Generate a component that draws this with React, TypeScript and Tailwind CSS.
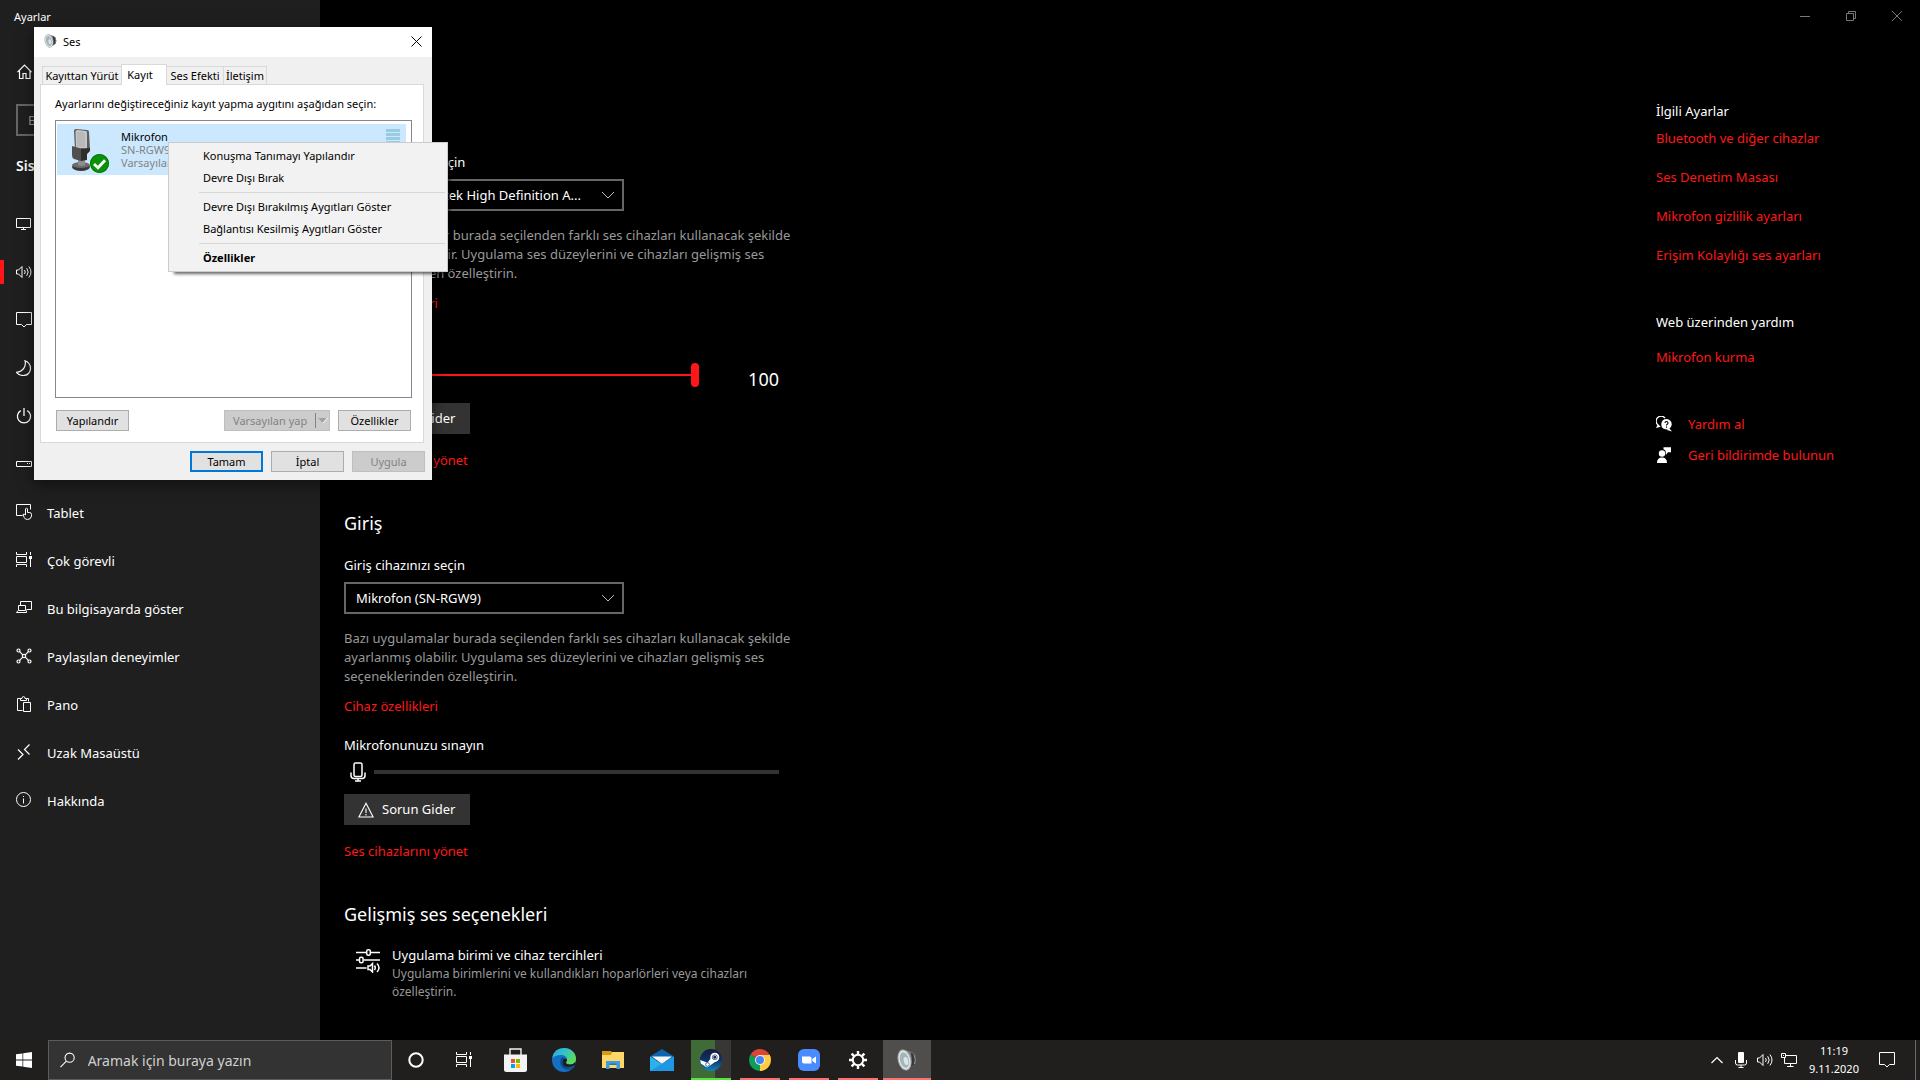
import React, { useState } from 'react';
import clsx from 'clsx';

type IconProps = { className?: string };

const line = {
  fill: 'none',
  stroke: 'currentColor',
  strokeWidth: 1,
} as const;

/* ---------- sidebar icons ---------- */

const HomeIcon = () => (
  <svg className="size-4" viewBox="0 0 16 16" {...line} strokeWidth={1.2}>
    <path d="M1.500 8.200 8.500 1.200l7 7M3.500 6.500v8h3.500v-5h3v5h4v-8" />
  </svg>
);

const DisplayIcon = () => (
  <svg className="size-4" viewBox="0 0 16 16" {...line}>
    <path d="M.5 2.500h14v9H.5zM7.500 11.500v2M5 13.500h5" />
  </svg>
);

const SpeakerIcon = ({ className = 'size-4' }: IconProps) => (
  <svg className={className} viewBox="0 0 16 16" {...line}>
    <path d="M.5 6v4h2l3.500 3.500v-11L2.500 6zM8.500 6q1.500 2 0 4M10.700 4.200q3 3.800 0 7.600M12.900 2.500q4.200 5.500 0 11" />
  </svg>
);

const NotifyIcon = ({ className = 'size-4' }: IconProps) => (
  <svg className={className} viewBox="0 0 16 16" {...line}>
    <path d="M.5.500h15v12h-5L8 15l-2.500-2.500h-5z" />
  </svg>
);

const MoonIcon = () => (
  <svg className="size-4" viewBox="0 0 16 16" {...line} strokeWidth={1.2}>
    <path d="M9 .7c1.400 5-1.500 11-8.500 11.600C2.500 15 5 15.500 7.500 15.500c4 0 7-3 7-7 0-3.800-2-6.500-5.500-7.800z" />
  </svg>
);

const PowerIcon = () => (
  <svg className="size-4" viewBox="0 0 16 16" {...line} strokeWidth={1.3}>
    <path d="M8 0v8M4.700 2.600a6.600 6.600 0 1 0 6.600 0" />
  </svg>
);

const StorageIcon = () => (
  <svg className="size-4" viewBox="0 0 16 16" {...line}>
    <path d="M.5 5.500h15v5H.5zM11 7.500h1M13 7.500h1" />
  </svg>
);

const TabletIcon = () => (
  <svg className="size-4" viewBox="0 0 16 16" {...line}>
    <path d="M6.500 11.500h-6v-11h14v5M9.500 11V4.800q1-1 2 0V8.500h2q2 0 2 2v1.500q-.5 3.500-4 3.500-2.500 0-3.300-2L7 10.500q1-1 2.500.5" />
  </svg>
);

const TaskViewIcon = ({ className = 'size-4' }: IconProps) => (
  <svg className={className} viewBox="0 0 16 16" {...line}>
    <path d="M.5 0v2.500h10V0M.5 15v-2.500h10V15M.5 4.500h10v6H.5zM14.500 0v3M14.500 7v8" />
    <path d="M13 4h3v3h-3z" fill="currentColor" stroke="none" />
  </svg>
);

const ProjectIcon = () => (
  <svg className="size-4" viewBox="0 0 16 16" {...line}>
    <path d="M4.500 5.500v-4h11v8h-5M2.500 5.500h7v5h-7zM2 10.500l-1.500 2h10v-2" />
  </svg>
);

const SharedIcon = () => (
  <svg className="size-4" viewBox="0 0 16 16" {...line} strokeWidth={1.2}>
    <circle cx="2.500" cy="2.500" r="1.500" />
    <circle cx="13.500" cy="2.500" r="1.500" />
    <circle cx="2.500" cy="13.500" r="1.500" />
    <circle cx="13.500" cy="13.500" r="1.500" />
    <circle cx="8" cy="8" r="1.700" />
    <path d="M3.600 3.600 6.800 6.800M12.400 3.600 9.200 6.800M3.600 12.400l3.200-3.200M12.400 12.400 9.200 9.200" />
  </svg>
);

const ClipboardIcon = () => (
  <svg className="size-4" viewBox="0 0 16 16" {...line}>
    <path d="M6.500 14.500h-5v-12h3M10.500 2.500h2v3M4.500 4.500v-2h1.500q0-2 1.500-2t1.500 2h1.500v2zM7.500 6.500h7v9h-7z" />
  </svg>
);

const RemoteIcon = () => (
  <svg className="size-4" viewBox="0 0 16 16" {...line} strokeWidth={1.2}>
    <path d="M2 5.500 7 10.500 2 15.500M13.500.500 8.500 5.500l5 5" />
  </svg>
);

const InfoIcon = () => (
  <svg className="size-4" viewBox="0 0 16 16" {...line}>
    <circle cx="7.500" cy="7.500" r="7" />
    <path d="M7.500 6.500v5M7.500 4v1" />
  </svg>
);

/* ---------- content icons ---------- */

const ChevronDown = ({ className }: IconProps) => (
  <svg className={className} width="14" height="8" viewBox="0 0 14 8" {...line}>
    <path d="M1 1l6 6 6-6" />
  </svg>
);

const WarningIcon = () => (
  <svg className="size-4" viewBox="0 0 16 16" {...line} strokeWidth={1.1}>
    <path d="M8 1.200.9 15h14.200zM8 6.500v4.500M8 12v1.500" />
  </svg>
);

const MicIcon = () => (
  <svg width="16" height="20" viewBox="0 0 16 20" {...line} strokeWidth={1.5}>
    <rect x="4" y="1" width="8" height="13.500" rx="1.500" />
    <path d="M1 10.500v3q0 3 3 3h8q3 0 3-3v-3M8 16.500V19M5 19h6" />
  </svg>
);

const MixerIcon = () => (
  <svg className="size-6" viewBox="0 0 24 24" {...line} strokeWidth={1.5}>
    <path d="M0 3.500h10M15 3.500h9M0 11h3M8 11h16M0 19h10.500" />
    <rect x="10.700" y=".8" width="3.600" height="5.400" rx="1.500" />
    <rect x="3.500" y="8.300" width="3.600" height="5.400" rx="1.500" />
    <path d="M12 17v3.500h2l2.500 2.500v-8.500L14 17zM18.500 16.500q1.500 2.200 0 4.500M21 14.500q4 4.200 0 8.500" />
  </svg>
);

const HelpIcon = () => (
  <svg className="size-4" viewBox="0 0 16 16">
    <path d="M3.200 9.800A5 5 0 1 1 9 2" fill="none" stroke="currentColor" strokeWidth="1.300" />
    <path d="M0 12l1.800-3.500 3 2.300z" fill="currentColor" />
    <path d="M10.500 3a5.200 5.200 0 1 1-1 10.300A5.200 5.200 0 0 1 10.500 3zM13 12l3 3.600-5-1.600z" fill="currentColor" />
    <path d="M9 7q0-1.500 1.500-1.500T12 7q0 .8-.8 1.300-.7.500-.7 1.200M10.500 10.500v1.200" fill="none" stroke="#000" strokeWidth="1.100" />
  </svg>
);

const FeedbackIcon = () => (
  <svg className="size-4" viewBox="0 0 16 16" fill="currentColor">
    <circle cx="6" cy="6.500" r="3.200" />
    <path d="M1 16q0-5.500 5-5.500t5 5.500zM7.500.3H15v5h-3L9.800 8V5.200q0-2.500-2.300-3z" />
  </svg>
);

/* ---------- dialog drawings ---------- */

const LoudspeakerIcon = ({ className }: IconProps) => (
  <svg className={className} viewBox="0 0 20 22">
    <path d="M6 .5 15 3l3 3q2 5 0 9l-4 3-6 3z" fill="#7c8082" />
    <path d="M13.500 3 18 6q2 5 0 9l-5 3.500q3-8 .5-15.500z" fill="#35383a" />
    <path d="M17 5.500q2.500 5 .5 9.500" fill="none" stroke="#9da1a3" />
    <ellipse cx="7.500" cy="11" rx="6.200" ry="10.200" transform="rotate(-14 7.500 11)" fill="#e4e8ea" stroke="#a4a9ab" />
    <ellipse cx="7.500" cy="11" rx="4.500" ry="8" transform="rotate(-14 7.500 11)" fill="#a3b4bb" />
    <ellipse cx="9" cy="12" rx="2.200" ry="4" transform="rotate(-14 9 12)" fill="#dbe5e9" />
  </svg>
);

const MicrophoneDevice = () => (
  <svg width="40" height="46" viewBox="0 0 40 46">
    <ellipse cx="10" cy="39" rx="9" ry="4" fill="#3a3a3a" />
    <ellipse cx="10" cy="37" rx="9" ry="3" fill="#6c6c6c" />
    <path d="M7 30h7v7q-3 2-7 0z" fill="#8d8d8d" />
    <path d="M3 3q0-2 2-2l11 1q2 0 2 2l1 17-15 1z" fill="#5e5e5e" />
    <path d="M4.500 4q0-2 2-2l8.500 1q1 0 1 2v16L5 20z" fill="#c6c6c6" />
    <path d="M7 4v15M9 4v15M11 4v15M13 5v14" stroke="#a2a2a2" strokeWidth=".7" />
    <path d="M1 18l9 2.500V33L3 31q-2-1-2-4z" fill="#505050" />
    <path d="M10 20.500 19 20v3l-3 3v6l-6 1z" fill="#2e2e2e" />
    <circle cx="28.500" cy="35.500" r="9.500" fill="#0a930a" />
    <circle cx="28.500" cy="35.500" r="9" fill="none" stroke="#076b07" strokeWidth=".8" />
    <path d="M23 36l4 3.700 7-7.500" fill="none" stroke="#fff" strokeWidth="2.800" />
  </svg>
);

/* ---------- taskbar logos ---------- */

const WindowsLogo = () => (
  <svg className="size-4" viewBox="0 0 16 16" fill="#fff">
    <path d="M0 2.300 6.500 1.400v6.200H0zM7.200 1.300 16 0v7.600H7.200zM0 8.400h6.500v6.200L0 13.700zM7.200 8.400H16V16l-8.800-1.300z" />
  </svg>
);

const StoreLogo = () => (
  <svg className="size-6" viewBox="0 0 24 24">
    <path d="M7 7V1h11v6" fill="none" stroke="#f2f2f2" strokeWidth="1.400" />
    <path d="M1 6.500h23v15q0 2.500-2.500 2.500h-18Q1 24 1 21.500z" fill="#f3f3f3" />
    <path d="M8 11h4v4H8z" fill="#f25022" />
    <path d="M13 11h4v4h-4z" fill="#7fba00" />
    <path d="M8 16h4v4H8z" fill="#00a4ef" />
    <path d="M13 16h4v4h-4z" fill="#ffb900" />
  </svg>
);

const EdgeLogo = () => (
  <svg className="size-6" viewBox="0 0 24 24">
    <defs>
      <linearGradient id="edgeTop" x1="0" y1="0" x2="1" y2=".6">
        <stop offset="0" stopColor="#2aa7e0" />
        <stop offset=".5" stopColor="#35c1c9" />
        <stop offset="1" stopColor="#5fdc55" />
      </linearGradient>
    </defs>
    <circle cx="12" cy="12" r="12" fill="#1470c4" />
    <path d="M.3 10Q2 0 12 0c7 0 12 5 12 10.500 0 4-3 6-6 6-2.500 0-4-1-4-2 0-.8 1-1 1-3C15 9 13 7.500 10 7 6 6.500 2 8 .3 10z" fill="url(#edgeTop)" />
    <path d="M9.800 9.500C7.500 12 7.500 17 11 20c3 2.500 8 2 11-.5q.5-.5 0-1c-5 2.200-11 .5-11.500-4-.2-2 .5-3.500 1.500-4.200-.5-1-1.500-1.200-2.200-.8z" fill="#0c4a94" />
    <path d="M11 11.500q-2 6.500 4 7.500 4 .5 7.500-1.500l1-1.500-.2-2q-2 2.500-5.300 2.500c-2.500 0-4-1-4-2 0-.8 1-1 1-3-1-1.500-3.500-1.500-4 0z" fill="#201f1e" />
  </svg>
);

const FolderLogo = () => (
  <svg className="size-6" viewBox="0 0 24 24">
    <path d="M1 3h9l1.500 2H22v5H1z" fill="#d99a16" />
    <path d="M11 4h12v16H1V7h9z" fill="#ffd667" />
    <path d="M5 13h14v8h-3.500v-4h-7v4H5z" fill="#3d9be2" />
    <path d="M8.500 15.500h7V17h-7z" fill="#1c77c2" />
  </svg>
);

const MailLogo = () => (
  <svg className="size-6" viewBox="0 0 24 24">
    <path d="M0 8.500 12 1l12 7.500V12H0z" fill="#0f64b0" />
    <path d="M2 8.500h20L12 16z" fill="#f6f6f6" />
    <path d="M0 8.500 12 16l12-7.500V23H0z" fill="#2bb2ee" />
    <path d="M0 23 24 8.500V23z" fill="#1c98e4" />
  </svg>
);

const SteamLogo = () => (
  <svg className="size-[22px]" viewBox="0 0 22 22">
    <defs>
      <linearGradient id="steamBg" x1="0" y1="0" x2="0" y2="1">
        <stop offset="0" stopColor="#15193f" />
        <stop offset=".5" stopColor="#0d3266" />
        <stop offset="1" stopColor="#1383bd" />
      </linearGradient>
    </defs>
    <circle cx="11" cy="11" r="11" fill="url(#steamBg)" />
    <path d="M.2 11 7.500 13.700l4-5.500 6 3-7.500 5.300q-1.500 2.500-4 1.500L.8 14.500z" fill="#fff" />
    <circle cx="14.800" cy="8.200" r="3.600" fill="#15305f" stroke="#fff" strokeWidth="1.800" />
    <circle cx="14.800" cy="8.200" r="1.900" fill="none" stroke="#fff" strokeWidth=".7" />
    <circle cx="7.500" cy="15.500" r="1.900" fill="#fff" stroke="#15507f" strokeWidth=".8" />
  </svg>
);

const ChromeLogo = () => (
  <svg className="size-[22px]" viewBox="0 0 22 22">
    <path d="M11 11 1.500 5.500A11 11 0 0 1 20.500 5.500z" fill="#db4437" />
    <path d="M11 11 20.500 5.500A11 11 0 0 1 11 22z" fill="#ffcd40" />
    <path d="M11 11v11A11 11 0 0 1 1.500 5.500z" fill="#0f9d58" />
    <path d="M11 6h9.800q2.200 6-2 11-3 4.500-7.800 5l4.500-8z" fill="#ffcd40" />
    <circle cx="11" cy="11" r="5" fill="#f1f1f1" />
    <circle cx="11" cy="11" r="4" fill="#4285f4" />
  </svg>
);

const ZoomLogo = () => (
  <svg className="size-[22px]" viewBox="0 0 22 22">
    <rect width="22" height="22" rx="6" fill="#4a8cff" />
    <path d="M4 7.500h7.500q2 0 2 2v5H6q-2 0-2-2zM14.300 10 18 7.500v7l-3.700-2.500z" fill="#fff" />
  </svg>
);

const GearLogo = () => (
  <svg className="size-[18px]" viewBox="0 0 18 18" fill="none" stroke="#fff">
    <circle cx="9" cy="9" r="5.200" strokeWidth="2" />
    <path d="M9 0v3.500M9 14.500V18M0 9h3.500M14.500 9H18M2.600 2.600l2.500 2.500M12.900 12.900l2.500 2.500M15.400 2.600l-2.500 2.500M5.100 12.900l-2.500 2.500" strokeWidth="2.400" />
  </svg>
);

/* ---------- data ---------- */

const navItems = [
  { label: 'Ekran', icon: <DisplayIcon /> },
  { label: 'Ses', icon: <SpeakerIcon />, active: true },
  { label: 'Bildirimler ve eylemler', icon: <NotifyIcon /> },
  { label: 'Odaklanma yardımı', icon: <MoonIcon /> },
  { label: 'Güç ve uyku', icon: <PowerIcon /> },
  { label: 'Depolama', icon: <StorageIcon /> },
  { label: 'Tablet', icon: <TabletIcon /> },
  { label: 'Çok görevli', icon: <TaskViewIcon /> },
  { label: 'Bu bilgisayarda göster', icon: <ProjectIcon /> },
  { label: 'Paylaşılan deneyimler', icon: <SharedIcon /> },
  { label: 'Pano', icon: <ClipboardIcon /> },
  { label: 'Uzak Masaüstü', icon: <RemoteIcon /> },
  { label: 'Hakkında', icon: <InfoIcon /> },
];

const relatedLinks = [
  'Bluetooth ve diğer cihazlar',
  'Ses Denetim Masası',
  'Mikrofon gizlilik ayarları',
  'Erişim Kolaylığı ses ayarları',
];

const apps = [
  { name: 'Microsoft Store', logo: <StoreLogo />, state: 'pinned' },
  { name: 'Microsoft Edge', logo: <EdgeLogo />, state: 'pinned' },
  { name: 'Dosya Gezgini', logo: <FolderLogo />, state: 'pinned' },
  { name: 'Posta', logo: <MailLogo />, state: 'pinned' },
  { name: 'Steam', logo: <SteamLogo />, state: 'progress' },
  { name: 'Google Chrome', logo: <ChromeLogo />, state: 'running' },
  { name: 'Zoom', logo: <ZoomLogo />, state: 'running' },
  { name: 'Ayarlar', logo: <GearLogo />, state: 'running' },
  { name: 'Ses', logo: <LoudspeakerIcon className="h-[22px] w-5" />, state: 'active' },
];

/* ---------- settings window ---------- */

const Sidebar = () => (
  <aside className="flex w-80 shrink-0 flex-col bg-[#1f1f1f]">
    <div className="flex h-8 items-center pt-0.5 pl-3.5 text-[11px]">Ayarlar</div>
    <a href="#home" className="mt-4 flex h-12 items-center gap-4 pl-4">
      <HomeIcon />
      Giriş
    </a>
    <input
      type="search"
      aria-label="Ayar bulun"
      placeholder="Bir ayar bulun"
      className="mx-4 mt-2 h-8 border-2 border-[#666] bg-transparent px-2.5 placeholder:text-[#999]"
    />
    <h2 className="mt-5 pl-4 text-sm leading-5 font-semibold">Sistem</h2>
    <nav className="mt-6">
      {navItems.map((item) => (
        <a key={item.label} href="#" className="relative flex h-12 items-center gap-[15px] pl-4">
          {item.active && <span className="absolute left-0 h-6 w-1 bg-[#ff1717]" />}
          {item.icon}
          <span className="pt-[3px]">{item.label}</span>
        </a>
      ))}
    </nav>
  </aside>
);

const RedLink = ({ children, className }: { children: React.ReactNode; className?: string }) => (
  <a href="#" className={clsx('leading-5 text-[#ff1717]', className)}>
    {children}
  </a>
);

const DeviceSelect = ({ id, label, value }: { id: string; label: string; value: string }) => (
  <div className="mt-[18px] flex flex-col">
    <label htmlFor={id} className="leading-5">
      {label}
    </label>
    <div className="relative mt-[7px] w-[280px]">
      <select
        id={id}
        className="h-8 w-full appearance-none border-2 border-[#666] bg-black pt-px pr-8 pl-2.5 text-white"
      >
        <option>{value}</option>
      </select>
      <ChevronDown className="pointer-events-none absolute top-3 right-[9px] text-[#bbb]" />
    </div>
    <p className="mt-[15px] leading-[19px] text-[#999]">
      Bazı uygulamalar burada seçilenden farklı ses cihazları kullanacak şekilde ayarlanmış
      olabilir. Uygulama ses düzeylerini ve cihazları gelişmiş ses seçeneklerinden özelleştirin.
    </p>
    <RedLink className="mt-2.5 self-start">Cihaz özellikleri</RedLink>
  </div>
);

const TroubleshootButton = () => (
  <button className="mt-1.5 flex h-[31px] w-[126px] items-center gap-2 self-start bg-[#333] pl-3.5">
    <WarningIcon />
    Sorun Gider
  </button>
);

const SettingsContent = () => {
  const [volume, setVolume] = useState(100);

  return (
    <div className="box-content flex w-[460px] flex-col pl-6">
      <h1 className="mt-3 text-3xl">Ses</h1>

      <section className="mt-[26px] flex flex-col">
        <h2 className="text-lg leading-7">Çıkış</h2>
        <DeviceSelect
          id="output"
          label="Çıkış cihazınızı seçin"
          value="Hoparlör (Realtek High Definition A..."
        />
        <label htmlFor="volume" className="mt-[19px] leading-5">
          Ses düzeyi
        </label>
        <div className="mt-px flex h-11 items-center pl-3">
          <SpeakerIcon />
          <input
            id="volume"
            type="range"
            value={volume}
            onChange={(e) => setVolume(Number(e.target.value))}
            className="ml-4 h-6 w-[311px] appearance-none bg-transparent [&::-webkit-slider-runnable-track]:h-0.5 [&::-webkit-slider-runnable-track]:bg-[#ff1717] [&::-webkit-slider-thumb]:-mt-[11px] [&::-webkit-slider-thumb]:h-6 [&::-webkit-slider-thumb]:w-2 [&::-webkit-slider-thumb]:appearance-none [&::-webkit-slider-thumb]:rounded-full [&::-webkit-slider-thumb]:bg-[#ff1717]"
          />
          <output htmlFor="volume" className="w-20 pt-2 text-right text-lg">
            {volume}
          </output>
        </div>
        <TroubleshootButton />
        <RedLink className="mt-4 self-start">Ses cihazlarını yönet</RedLink>
      </section>

      <section className="mt-[39px] flex flex-col">
        <h2 className="text-lg leading-7">Giriş</h2>
        <DeviceSelect id="input" label="Giriş cihazınızı seçin" value="Mikrofon (SN-RGW9)" />
        <div className="mt-[19px] leading-5">Mikrofonunuzu sınayın</div>
        <div className="mt-px flex h-8 items-center pl-1.5">
          <MicIcon />
          <div
            role="meter"
            aria-label="Mikrofonunuzu sınayın"
            aria-valuenow={0}
            className="ml-2 h-1 w-[405px] bg-[#333]"
          />
        </div>
        <TroubleshootButton />
        <RedLink className="mt-4 self-start">Ses cihazlarını yönet</RedLink>
      </section>

      <section className="mt-[39px]">
        <h2 className="text-lg leading-7">Gelişmiş ses seçenekleri</h2>
        <a href="#" className="mt-[18px] flex gap-3 pl-3">
          <span className="mt-[3px]">
            <MixerIcon />
          </span>
          <span>
            <span className="block leading-[19px]">Uygulama birimi ve cihaz tercihleri</span>
            <span className="block text-xs leading-[18px] text-[#999]">
              Uygulama birimlerini ve kullandıkları hoparlörleri veya cihazları özelleştirin.
            </span>
          </span>
        </a>
      </section>
    </div>
  );
};

const RelatedColumn = () => (
  <aside className="w-[264px] shrink-0 pt-[69px]">
    <h3 className="leading-5">İlgili Ayarlar</h3>
    <ul className="mt-[7px] flex flex-col gap-[19px]">
      {relatedLinks.map((text) => (
        <li key={text} className="h-5">
          <RedLink>{text}</RedLink>
        </li>
      ))}
    </ul>
    <h3 className="mt-[47px] leading-5">Web üzerinden yardım</h3>
    <div className="mt-[15px] h-5">
      <RedLink>Mikrofon kurma</RedLink>
    </div>
    <div className="mt-[47px] flex items-center gap-4">
      <HelpIcon />
      <RedLink>Yardım al</RedLink>
    </div>
    <div className="mt-[11px] flex items-center gap-4">
      <FeedbackIcon />
      <RedLink>Geri bildirimde bulunun</RedLink>
    </div>
  </aside>
);

const WindowControls = () => (
  <div className="flex h-8 justify-end text-[#777]">
    <button aria-label="Simge durumuna küçült" className="flex w-[46px] items-center justify-center">
      <svg width="10" height="10" viewBox="0 0 10 10" {...line}>
        <path d="M0 5.500h10" />
      </svg>
    </button>
    <button aria-label="Önceki boyut" className="flex w-[46px] items-center justify-center">
      <svg width="10" height="10" viewBox="0 0 10 10" {...line}>
        <path d="M.5 2.500h7v7h-7zM2.500 2.500v-2h7v7h-2" />
      </svg>
    </button>
    <button aria-label="Kapat" className="flex w-[46px] items-center justify-center">
      <svg width="10" height="10" viewBox="0 0 10 10" {...line}>
        <path d="M0 0l10 10M10 0 0 10" />
      </svg>
    </button>
  </div>
);

/* ---------- sound dialog ---------- */

const DialogButton = ({
  children,
  primary,
  disabled,
}: {
  children: React.ReactNode;
  primary?: boolean;
  disabled?: boolean;
}) => (
  <button
    disabled={disabled}
    className={clsx(
      'h-[21px] w-[73px] text-center',
      primary && 'border-2 border-[#0078d7] bg-[#e1e1e1]',
      disabled && 'border border-[#bfbfbf] bg-[#ccc] text-[#838383]',
      !primary && !disabled && 'border border-[#adadad] bg-[#e1e1e1]',
    )}
  >
    {children}
  </button>
);

const SoundDialog = () => (
  <div
    role="dialog"
    aria-label="Ses"
    className="absolute top-[27px] left-[34px] w-[398px] bg-[#f0f0f0] text-[11px] leading-[13px] text-black shadow-[0_4px_14px_rgba(0,0,0,0.5)]"
  >
    <div className="flex h-[30px] items-center bg-white pb-0.5 pl-2.5">
      <LoudspeakerIcon className="h-3.5 w-[13px]" />
      <span className="ml-1.5">Ses</span>
      <button aria-label="Kapat" className="mr-2.5 ml-auto">
        <svg width="11" height="11" viewBox="0 0 11 11" {...line}>
          <path d="M.5.500l10 10M10.500.500l-10 10" />
        </svg>
      </button>
    </div>

    <div className="px-1.5 pt-[7px] pb-2">
      <div role="tablist" className="flex items-end pl-0.5">
        <button role="tab" className="h-[18px] w-20 border border-b-0 border-[#d9d9d9] whitespace-nowrap">
          Kayıttan Yürüt
        </button>
        <button
          role="tab"
          aria-selected
          className="relative -mb-px -ml-px h-[21px] w-[46px] border border-b-0 border-[#d9d9d9] bg-white pr-2 pb-0.5"
        >
          Kayıt
        </button>
        <button role="tab" className="h-[18px] w-[57px] border border-b-0 border-l-0 border-[#d9d9d9] whitespace-nowrap">
          Ses Efekti
        </button>
        <button role="tab" className="h-[18px] w-[43px] border border-b-0 border-l-0 border-[#d9d9d9]">
          İletişim
        </button>
      </div>

      <div
        role="tabpanel"
        className="mr-0.5 border border-[#d9d9d9] bg-white pt-3 pr-[11px] pb-[11px] pl-3.5"
      >
        <p>Ayarlarını değiştireceğiniz kayıt yapma aygıtını aşağıdan seçin:</p>
        <div role="listbox" className="mt-2.5 h-[278px] w-full border border-[#828790] px-px pt-[3px]">
          <div role="option" aria-selected className="mr-1 flex h-[51px] items-start bg-[#cce8ff] pt-1">
            <div className="ml-3.5">
              <MicrophoneDevice />
            </div>
            <div className="ml-2.5 pt-0.5">
              <div>Mikrofon</div>
              <div className="text-[#838383]">SN-RGW9</div>
              <div className="text-[#838383]">Varsayılan Aygıt</div>
            </div>
            <div className="mt-px mr-1.5 ml-auto flex flex-col gap-px">
              {[0, 1, 2, 3, 4, 5, 6, 7].map((bar) => (
                <span key={bar} className="h-[3px] w-3.5 bg-[#99cbe3]" />
              ))}
            </div>
          </div>
        </div>
        <div className="mt-3 flex gap-2 px-px">
          <DialogButton>Yapılandır</DialogButton>
          <button
            disabled
            className="ml-auto flex h-[21px] w-[106px] items-center border border-[#bfbfbf] bg-[#ccc] pl-2 whitespace-nowrap text-[#838383]"
          >
            Varsayılan yap
            <span className="ml-auto h-[15px] w-px bg-[#838383]" />
            <svg className="mx-px" width="11" height="7" viewBox="0 0 11 7">
              <path d="M1 1h9L6 6z" fill="#a0a0a0" />
              <path d="M10.500 1 6 6" stroke="#fff" />
            </svg>
          </button>
          <DialogButton>Özellikler</DialogButton>
        </div>
      </div>

      <div className="mt-2 flex justify-end gap-2 pr-px">
        <DialogButton primary>Tamam</DialogButton>
        <DialogButton>İptal</DialogButton>
        <DialogButton disabled>Uygula</DialogButton>
      </div>
    </div>
  </div>
);

const menuItem = 'block h-[22px] w-full pl-[34px] text-left';

const ContextMenu = () => (
  <div
    role="menu"
    className="absolute top-[142px] left-[168px] w-[280px] border border-[#ccc] bg-[#f2f2f2] py-0.5 text-[11px] text-black shadow-[4px_4px_3px_-2px_rgba(0,0,0,0.6)]"
  >
    <button role="menuitem" className={menuItem}>
      Konuşma Tanımayı Yapılandır
    </button>
    <button role="menuitem" className={menuItem}>
      Devre Dışı Bırak
    </button>
    <hr className="my-[3px] mr-0.5 ml-[30px] border-[#d7d7d7]" />
    <button role="menuitem" className={menuItem}>
      Devre Dışı Bırakılmış Aygıtları Göster
    </button>
    <button role="menuitem" className={menuItem}>
      Bağlantısı Kesilmiş Aygıtları Göster
    </button>
    <hr className="my-[3px] mr-0.5 ml-[30px] border-[#d7d7d7]" />
    <button role="menuitem" className={clsx(menuItem, 'font-bold')}>
      Özellikler
    </button>
  </div>
);

/* ---------- taskbar ---------- */

const Taskbar = () => (
  <footer className="flex h-10 shrink-0 bg-[#201f1e]">
    <button aria-label="Başlat" className="flex w-12 items-center justify-center">
      <WindowsLogo />
    </button>
    <label className="flex w-[344px] items-center border border-[#5c5c5c] bg-[#333] pl-[11px]">
      <svg className="size-4" viewBox="0 0 16 16" {...line} strokeWidth={1.2}>
        <circle cx="10.500" cy="5.500" r="5" />
        <path d="M7 9.200.5 15.700" />
      </svg>
      <input
        type="text"
        aria-label="Ara"
        placeholder="Aramak için buraya yazın"
        className="ml-[13px] w-full bg-transparent pt-px text-sm placeholder:text-[#d0d0d0]"
      />
    </label>
    <div className="flex">
      <button aria-label="Cortana" className="flex w-12 items-center justify-center">
        <svg className="size-4" viewBox="0 0 16 16">
          <circle cx="8" cy="8" r="6.700" fill="none" stroke="#fff" strokeWidth="2" />
        </svg>
      </button>
      <button aria-label="Görev Görünümü" className="flex w-12 items-center justify-center">
        <TaskViewIcon />
      </button>
    </div>
    <div className="ml-[3px] flex gap-px">
      {apps.map((app) => (
        <button
          key={app.name}
          aria-label={app.name}
          className={clsx(
            'relative flex w-12 items-center justify-center',
            app.state === 'active' && 'bg-[#4f4e4d]',
          )}
        >
          {app.state === 'progress' && (
            <span className="absolute inset-y-0 left-1 flex w-10 border-b-2 border-[#55e83c] bg-[#383736]">
              <span className="w-6 bg-[#3f6c36]" />
            </span>
          )}
          <span className="relative">{app.logo}</span>
          {app.state === 'running' && (
            <span className="absolute inset-x-1 bottom-0 h-0.5 bg-[#ff7070]" />
          )}
          {app.state === 'active' && (
            <span className="absolute inset-x-0 bottom-0 h-0.5 bg-[#ff7070]" />
          )}
        </button>
      ))}
    </div>
    <div className="ml-auto flex items-center">
      <button aria-label="Gizli simgeleri göster" className="w-6">
        <svg className="mx-auto" width="12" height="8" viewBox="0 0 12 8" {...line} strokeWidth={1.2}>
          <path d="M.5 7 6 1.500 11.500 7" />
        </svg>
      </button>
      <button aria-label="Mikrofon" className="w-6">
        <svg className="mx-auto" width="12" height="16" viewBox="0 0 12 16" {...line}>
          <rect x="3" y="0" width="6" height="11" rx="1" fill="currentColor" stroke="none" />
          <path d="M.5 8v3q0 2 2 2h7q2 0 2-2V8M6 13v2.500M3.500 15.500h5" />
        </svg>
      </button>
      <button aria-label="Ses" className="flex w-6 justify-center">
        <SpeakerIcon />
      </button>
      <button aria-label="Ağ" className="w-6">
        <svg className="mx-auto size-4" viewBox="0 0 16 16" {...line}>
          <path d="M5 3.500h10.500v8H3.500V6M.5 1.500h4v4h-4zM2 3.500h1M9.500 11.500v3M6 14.500h6.500" />
        </svg>
      </button>
      <div className="w-[66px] text-center text-[11px] leading-[18px]">
        <div>11:19</div>
        <div>9.11.2020</div>
      </div>
      <button aria-label="Bildirimler" className="flex w-10 justify-center">
        <NotifyIcon />
      </button>
      <span className="mr-1 ml-2 h-10 w-px bg-[#6a6a6a]" />
    </div>
  </footer>
);

const App: React.FC = () => {
  return (
    <div className="relative flex min-h-screen flex-col bg-black font-['Noto_Sans','Open_Sans',sans-serif] text-[13px] text-white">
      <div className="flex flex-1">
        <Sidebar />
        <main className="flex flex-1 flex-col">
          <WindowControls />
          <div className="flex justify-between">
            <SettingsContent />
            <RelatedColumn />
          </div>
        </main>
      </div>
      <Taskbar />
      <SoundDialog />
      <ContextMenu />
    </div>
  );
};

export default App;
